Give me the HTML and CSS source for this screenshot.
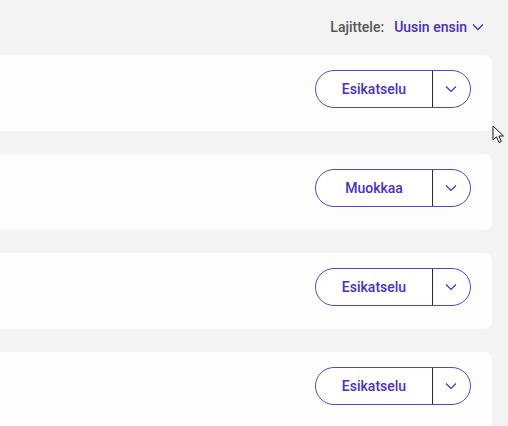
FILE: index.html
```html
<!DOCTYPE html>
<html>
    <head>
        <title>Sisällöt</title>
        <link rel="stylesheet" href="styles.css">
    </head>
    <body>
        <div class="toolbar">
            <span class="sort-label">Lajittele:</span>
            <button class="sort-select" type="button">
                Uusin ensin
                <svg width="12" height="8" viewBox="0 0 12 8"><path d="M1 1.5 L6 6.5 L11 1.5" fill="none" stroke="currentColor" stroke-width="1.3"/></svg>
            </button>
        </div>

        <div class="list">
            <div class="card">
                <div class="split-btn">
                    <button class="main" type="button">Esikatselu</button>
                    <button class="more" type="button">
                        <svg width="12" height="8" viewBox="0 0 12 8"><path d="M1 1.5 L6 6.5 L11 1.5" fill="none" stroke="currentColor" stroke-width="1.2"/></svg>
                    </button>
                </div>
            </div>
            <div class="card">
                <div class="split-btn">
                    <button class="main" type="button">Muokkaa</button>
                    <button class="more" type="button">
                        <svg width="12" height="8" viewBox="0 0 12 8"><path d="M1 1.5 L6 6.5 L11 1.5" fill="none" stroke="currentColor" stroke-width="1.2"/></svg>
                    </button>
                </div>
            </div>
            <div class="card">
                <div class="split-btn">
                    <button class="main" type="button">Esikatselu</button>
                    <button class="more" type="button">
                        <svg width="12" height="8" viewBox="0 0 12 8"><path d="M1 1.5 L6 6.5 L11 1.5" fill="none" stroke="currentColor" stroke-width="1.2"/></svg>
                    </button>
                </div>
            </div>
            <div class="card">
                <div class="split-btn">
                    <button class="main" type="button">Esikatselu</button>
                    <button class="more" type="button">
                        <svg width="12" height="8" viewBox="0 0 12 8"><path d="M1 1.5 L6 6.5 L11 1.5" fill="none" stroke="currentColor" stroke-width="1.2"/></svg>
                    </button>
                </div>
            </div>
        </div>

        <!-- mouse pointer -->
        <svg class="cursor" width="14" height="20" viewBox="0 0 14 20">
            <path d="M1 1 L1 15 L4.5 11.8 L7 17.5 L9.3 16.5 L6.9 11 L11.5 11 Z" fill="#fff" stroke="#111" stroke-width="1" stroke-linejoin="round"/>
        </svg>
    </body>
</html>
```

FILE: styles.css
```css
body {
    margin: 0;
    background-color: #f3f3f3;
    font-family: Roboto, "Liberation Sans", sans-serif;
    overflow: hidden;
}

.toolbar {
    height: 55px;
    width: 492px;
    display: flex;
    justify-content: flex-end;
    align-items: center;
    gap: 10px;
    box-sizing: border-box;
    padding-right: 8px;
    padding-bottom: 2px;
}

.sort-label {
    color: #555;
    font-size: 14px;
    font-weight: 500;
}

.sort-select {
    display: flex;
    align-items: center;
    gap: 5px;
    background: none;
    border: none;
    padding: 0;
    color: #4b2fb8;
    font-family: inherit;
    font-size: 14px;
    font-weight: 500;
}

.list {
    display: flex;
    flex-direction: column;
    gap: 23px;
}

.card {
    width: 492px;
    height: 76px;
    box-sizing: border-box;
    background-color: #fdfdfd;
    border-radius: 0 7px 7px 0;
    display: flex;
    justify-content: flex-end;
    align-items: flex-start;
    padding: 15px 21px 0 0;
}

.split-btn {
    display: flex;
    height: 38px;
    border: 1px solid #5a44c2;
    border-radius: 19px;
    box-sizing: border-box;
    overflow: hidden;
    background-color: #fff;
}

.split-btn button {
    background: none;
    border: none;
    color: #4b2fb8;
    font-family: inherit;
    font-size: 14px;
    font-weight: 500;
    cursor: pointer;
}

.split-btn .main {
    width: 117px;
    padding: 0;
    border-right: 1px solid #2a2a2a;
}

.split-btn .more {
    width: 37px;
    padding: 0 2px 0 0;
    display: flex;
    align-items: center;
    justify-content: center;
}

.cursor {
    position: absolute;
    left: 492px;
    top: 125px;
}
```
